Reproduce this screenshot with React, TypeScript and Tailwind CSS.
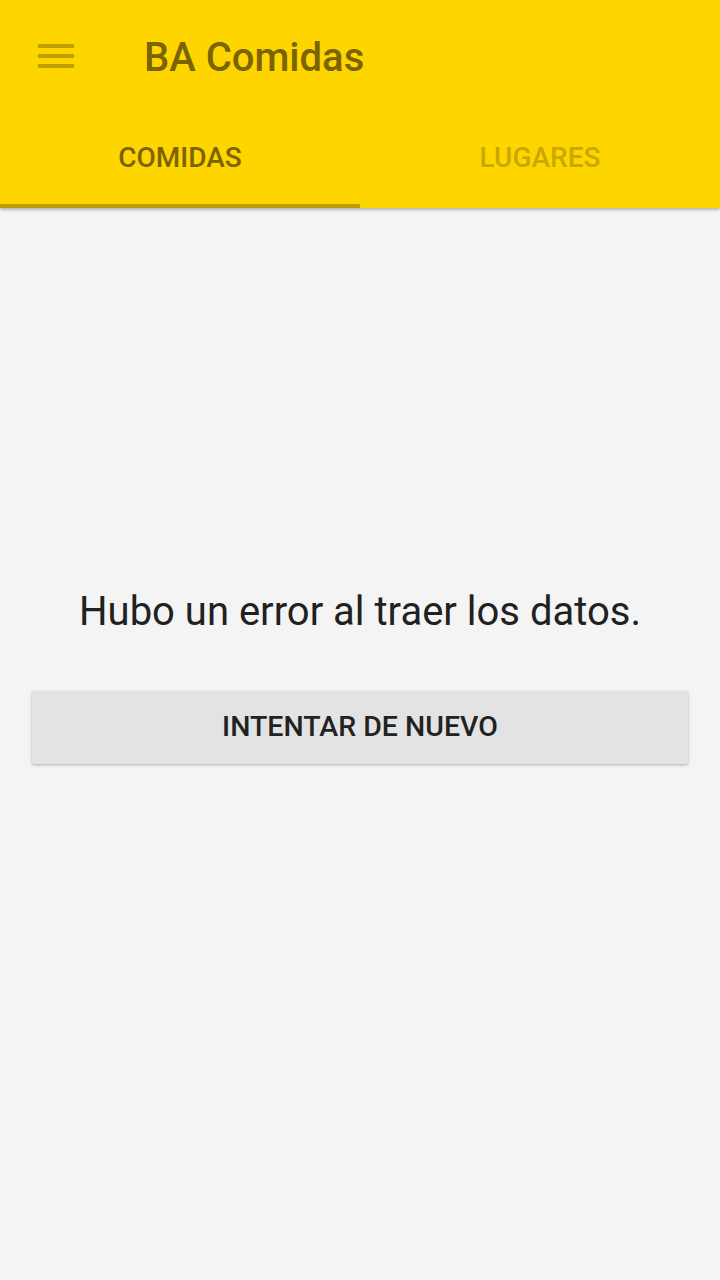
import React from "react";

export default function App() {
  return (
    <div className="w-[720px] h-[1280px] bg-[#f4f4f4] flex flex-col" style={{ fontFamily: "Roboto, 'Noto Sans', sans-serif" }}>
      <div className="bg-[#ffd500] shadow-[0_2px_3px_rgba(0,0,0,0.25)] relative z-10">
        <div className="h-[112px] flex items-start">
          <div className="ml-[38px] mt-[44px] flex flex-col gap-[6px]">
            <div className="w-[36px] h-[4px] bg-[#c09e00]" />
            <div className="w-[36px] h-[4px] bg-[#c09e00]" />
            <div className="w-[36px] h-[4px] bg-[#c09e00]" />
          </div>
          <div className="ml-[70px] mt-[38px] text-[40px] font-medium text-[#7a6300] leading-none">BA Comidas</div>
        </div>
        <div className="flex h-[96px]">
          <div className="flex-1 flex flex-col">
            <div className="flex-1 flex items-center justify-center text-[28px] font-medium text-[#7a6300] -mt-[1px]">COMIDAS</div>
            <div className="h-[4px] bg-[#bf9d00]" />
          </div>
          <div className="flex-1 flex flex-col">
            <div className="flex-1 flex items-center justify-center text-[28px] font-medium text-[#c9a800] -mt-[1px]">LUGARES</div>
            <div className="h-[4px]" />
          </div>
        </div>
      </div>
      <div className="flex-1 flex flex-col items-center px-[32px]">
        <div className="text-[40px] text-[#212121] leading-none mt-[384px]">Hubo un error al traer los datos.</div>
        <button className="mt-[59px] w-full h-[73px] bg-[#e3e3e3] shadow-[0_1px_3px_rgba(0,0,0,0.3)] text-[28.5px] font-medium text-[#222] rounded-[2px]">INTENTAR DE NUEVO</button>
      </div>
    </div>
  );
}
